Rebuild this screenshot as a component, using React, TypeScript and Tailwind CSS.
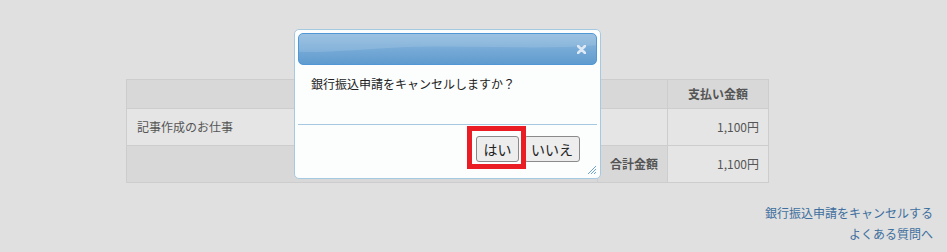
import React from 'react';

const jp = '[font-family:"Noto_Sans_CJK_JP","Noto_Sans",sans-serif]';

export default function App() {
  return (
    <div className={`relative w-[947px] h-[252px] overflow-hidden bg-[#e0e0e0] text-[12px] text-[#555] ${jp}`}>
      {/* order table */}
      <table className="ml-[126px] mt-[79px] w-[642px] border-collapse border border-[#cdcdcd] table-fixed">
        <colgroup>
          <col className="w-[471px]" />
          <col className="w-[70px]" />
          <col className="w-[101px]" />
        </colgroup>
        <tbody>
          <tr className="h-[29px] bg-[#d8d8d8]">
            <th colSpan={2} className="border border-[#cdcdcd]"></th>
            <th className="border border-[#cdcdcd] font-bold text-center leading-none">支払い金額</th>
          </tr>
          <tr className="h-[37px] bg-[#e5e5e5]">
            <td className="border border-[#cdcdcd] pl-[10px] leading-none">記事作成のお仕事</td>
            <td className="border-y border-[#cdcdcd]"></td>
            <td className="border border-[#cdcdcd] text-right pr-[9px] leading-none">1,100円</td>
          </tr>
          <tr className="h-[37px]">
            <td className="border border-[#cdcdcd] bg-[#d8d8d8]"></td>
            <th className="border border-[#cdcdcd] bg-[#d8d8d8] font-bold text-right pr-[9px] leading-none">合計金額</th>
            <td className="border border-[#cdcdcd] bg-[#e5e5e5] text-right pr-[9px] leading-none">1,100円</td>
          </tr>
        </tbody>
      </table>

      {/* links */}
      <div className="mt-[21px] pr-[14px] flex flex-col items-end gap-[3px] text-[#3e6f9e] leading-[18px]">
        <a className="cursor-pointer">銀行振込申請をキャンセルする</a>
        <a className="cursor-pointer">よくある質問へ</a>
      </div>

      {/* modal dialog */}
      <div className="absolute left-[294px] top-[29px] w-[307px] h-[150px] rounded-[5px] border border-[#a6c9e2] bg-[#fcfdfd] p-[3px] flex flex-col">
        <div className="relative h-[32px] rounded-[5px] border border-[#4f97d5] overflow-hidden bg-gradient-to-b from-[#8fbade] to-[#5f9bcf]">
          <svg className="absolute inset-0" width="100%" height="100%" viewBox="0 0 300 32" preserveAspectRatio="none">
            <path d="M0 0 H300 V12 C230 18 160 10 90 15 C50 18 20 20 0 19 Z" fill="#ffffff" opacity="0.12" />
          </svg>
          <svg className="absolute right-[10px] top-[11px]" width="9" height="9" viewBox="0 0 9 9">
            <path d="M1 1 L8 8 M8 1 L1 8" stroke="#dde9f5" strokeWidth="2.6" strokeLinecap="round" />
          </svg>
        </div>
        <div className="h-[59px] pl-[13px] pt-[10px] text-[#222] leading-[18px]">銀行振込申請をキャンセルしますか？</div>
        <div className="relative flex-1 border-t border-[#a6c9e2] flex justify-end items-start pt-[11px] pr-[17px] gap-[5px]">
          <button className="h-[26px] w-[43px] rounded-[3px] border border-[#8a8a8a] bg-[#ededed] text-[14px] text-[#222] leading-none">はい</button>
          <button className="h-[26px] w-[56px] rounded-[3px] border border-[#8a8a8a] bg-[#ededed] text-[14px] text-[#222] leading-none">いいえ</button>
          <svg className="absolute right-[0px] bottom-[0px]" width="11" height="11" viewBox="0 0 11 11">
            <path d="M10 2 L2 10 M10 5 L5 10 M10 8 L8 10" stroke="#6ea3d3" strokeWidth="1" />
          </svg>
        </div>
      </div>

      {/* highlight annotation */}
      <div className="absolute left-[467px] top-[126px] w-[59px] h-[43px] border-[5px] border-[#ea1c24]"></div>
    </div>
  );
}
